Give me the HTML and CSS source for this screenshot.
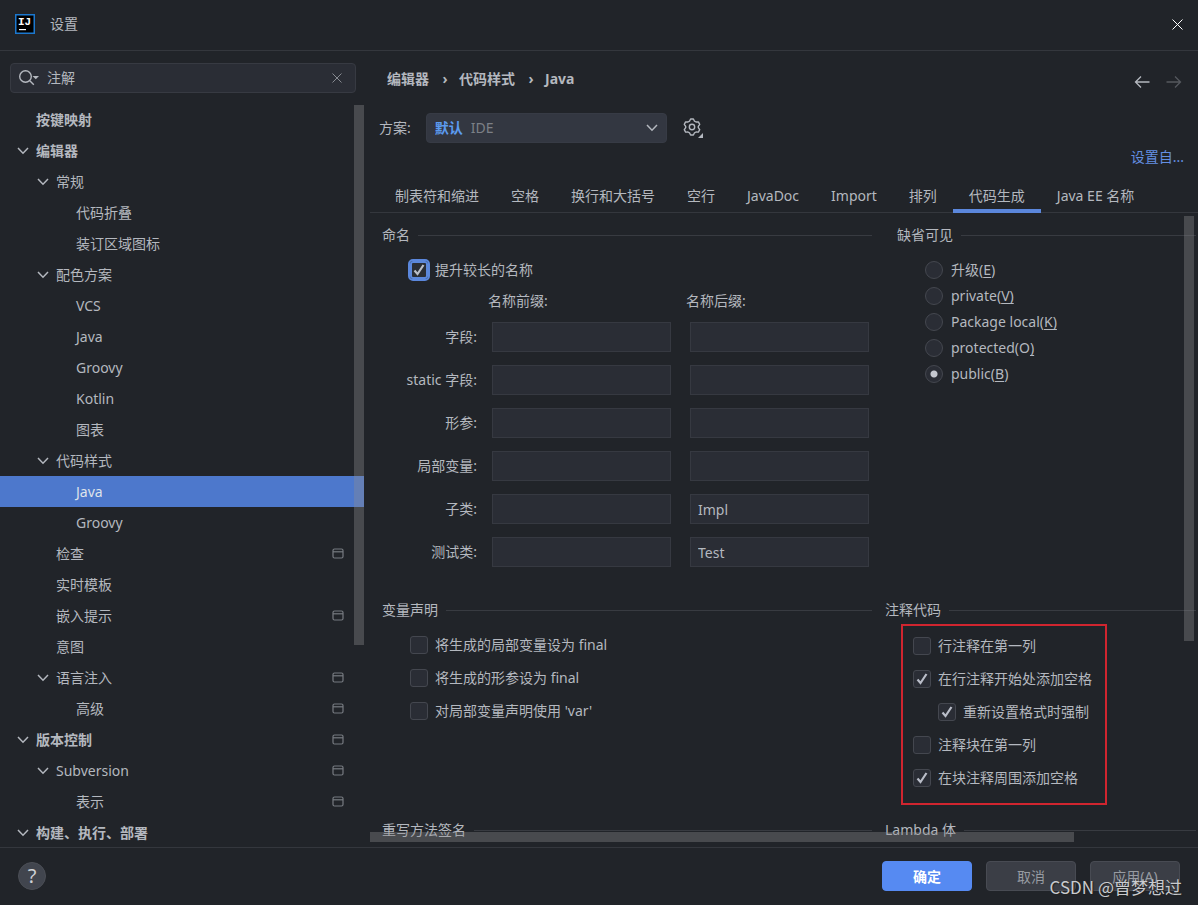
FILE: index.html
```html
<!DOCTYPE html>
<html lang="zh-CN">
<head>
<meta charset="utf-8">
<title>设置</title>
<link rel="stylesheet" href="styles.css">
</head>
<body>
<svg class="defs" aria-hidden="true">
  <symbol id="chev" viewBox="0 0 12 12"><path d="M1 3 6 8.200l5-5.200" fill="none" stroke="currentColor" stroke-width="1.500"/></symbol>
  <symbol id="proj" viewBox="0 0 12 12"><rect x="1" y="1" width="10" height="9" rx="1.500" fill="none" stroke="currentColor" stroke-width="1.200"/><path d="M1 3.800h10" stroke="currentColor" stroke-width="1.200"/></symbol>
</svg>

<header class="titlebar">
  <svg class="logo" viewBox="0 0 20 20" aria-hidden="true">
    <rect x=".75" y=".75" width="18.500" height="18.500" fill="#000" stroke="#1c78cf" stroke-width="1.500"/>
    <text class="logo-text" x="3" y="11">IJ</text>
    <rect x="4" y="15" width="7" height="1.200" fill="#fff"/>
  </svg>
  <h1 class="title">设置</h1>
  <button class="icon-btn close" aria-label="关闭"><svg width="11" height="11" viewBox="0 0 11 11"><path d="M.5.5l10 10M10.500.5l-10 10" stroke="#fff" fill="none"/></svg></button>
</header>

<main class="main">
  <aside class="sidebar">
    <div class="search">
      <svg class="search-icon" width="22" height="18" viewBox="0 0 22 18" aria-hidden="true"><circle cx="6.500" cy="7.500" r="5.800" fill="none" stroke="currentColor" stroke-width="1.400"/><path d="M10.800 11.800l4 4" stroke="currentColor" stroke-width="1.400"/><path d="M13.500 7h6.500l-3.200 3.200z" fill="currentColor"/></svg>
      <input class="search-input" type="text" value="注解" aria-label="搜索">
      <button class="icon-btn clear" aria-label="清除"><svg width="10" height="10" viewBox="0 0 10 10"><path d="M.5.5l9 9M9.500.5l-9 9" stroke="currentColor" fill="none"/></svg></button>
    </div>
    <div class="tree-area">
    <ul class="tree">
      <li class="node l1 bold">按键映射</li>
      <li class="node l1 bold"><svg class="chev"><use href="#chev"/></svg>编辑器</li>
      <li class="node l2"><svg class="chev"><use href="#chev"/></svg>常规</li>
      <li class="node l3">代码折叠</li>
      <li class="node l3">装订区域图标</li>
      <li class="node l2"><svg class="chev"><use href="#chev"/></svg>配色方案</li>
      <li class="node l3">VCS</li>
      <li class="node l3">Java</li>
      <li class="node l3">Groovy</li>
      <li class="node l3">Kotlin</li>
      <li class="node l3">图表</li>
      <li class="node l2"><svg class="chev"><use href="#chev"/></svg>代码样式</li>
      <li class="node l3 selected">Java</li>
      <li class="node l3">Groovy</li>
      <li class="node l2">检查<svg class="proj"><use href="#proj"/></svg></li>
      <li class="node l2">实时模板</li>
      <li class="node l2">嵌入提示<svg class="proj"><use href="#proj"/></svg></li>
      <li class="node l2">意图</li>
      <li class="node l2"><svg class="chev"><use href="#chev"/></svg>语言注入<svg class="proj"><use href="#proj"/></svg></li>
      <li class="node l3">高级<svg class="proj"><use href="#proj"/></svg></li>
      <li class="node l1 bold"><svg class="chev"><use href="#chev"/></svg>版本控制<svg class="proj"><use href="#proj"/></svg></li>
      <li class="node l2"><svg class="chev"><use href="#chev"/></svg>Subversion<svg class="proj"><use href="#proj"/></svg></li>
      <li class="node l3">表示<svg class="proj"><use href="#proj"/></svg></li>
      <li class="node l1 bold"><svg class="chev"><use href="#chev"/></svg>构建、执行、部署</li>
    </ul>
    <div class="scrollbar tree-scroll"></div>
    </div>
  </aside>

  <section class="content">
    <div class="crumb-bar">
      <nav class="crumbs"><span>编辑器</span><span class="sep">›</span><span>代码样式</span><span class="sep">›</span><span>Java</span></nav>
      <div class="history">
        <button class="icon-btn" aria-label="后退"><svg width="16" height="14" viewBox="0 0 16 14"><path d="M15.500 7H1.500M7 1.500 1.500 7 7 12.500" stroke="currentColor" stroke-width="1.300" fill="none"/></svg></button>
        <button class="icon-btn dim" aria-label="前进"><svg width="16" height="14" viewBox="0 0 16 14"><path d="M.5 7h14M9 1.500 14.500 7 9 12.500" stroke="currentColor" stroke-width="1.300" fill="none"/></svg></button>
      </div>
    </div>
    <div class="scheme">
      <label for="scheme">方案:</label>
      <div class="select-wrap">
        <select id="scheme" class="select"><option>默认</option></select>
        <span class="select-note">IDE</span>
        <svg class="select-arrow"><use href="#chev"/></svg>
      </div>
      <button class="icon-btn" aria-label="方案操作"><svg width="20" height="20" viewBox="0 0 20 20"><path d="M6.500 3.200 7.600 1h2.800l1.100 2.200 1.500.8 2.400-.1 1.300 2.400L15.300 8.300v1.400l1.400 2-1.300 2.400-2.400-.1-1.500.8-1.100 2.200H7.600l-1.100-2.200L5 14l-2.400.1-1.300-2.400 1.400-2V8.300l-1.400-2 1.300-2.400L5 4z" fill="none" stroke="currentColor" stroke-width="1.400" stroke-linejoin="round"/><circle cx="9" cy="9" r="2.700" fill="none" stroke="currentColor" stroke-width="1.400"/><path d="M20 15v5h-5z" fill="currentColor"/></svg></button>
    </div>
    <div class="link-row"><a class="link" href="#">设置自...</a></div>
    <div class="tabs" role="tablist">
      <button class="tab" role="tab">制表符和缩进</button>
      <button class="tab" role="tab">空格</button>
      <button class="tab" role="tab">换行和大括号</button>
      <button class="tab" role="tab">空行</button>
      <button class="tab" role="tab">JavaDoc</button>
      <button class="tab" role="tab">Import</button>
      <button class="tab" role="tab">排列</button>
      <button class="tab active" role="tab" aria-selected="true">代码生成</button>
      <button class="tab" role="tab">Java EE 名称</button>
    </div>

    <div class="panel">
      <div class="groups top">
        <section>
          <h2 class="group-title">命名</h2>
          <label class="check naming-check"><input class="box focused" type="checkbox" checked>提升较长的名称</label>
          <div class="fields">
            <span class="col-head first">名称前缀:</span><span class="col-head">名称后缀:</span>
            <label class="field-label" for="f1">字段:</label><input id="f1" class="field" type="text"><input class="field" type="text" aria-label="字段后缀">
            <label class="field-label" for="f2">static 字段:</label><input id="f2" class="field" type="text"><input class="field" type="text" aria-label="static 字段后缀">
            <label class="field-label" for="f3">形参:</label><input id="f3" class="field" type="text"><input class="field" type="text" aria-label="形参后缀">
            <label class="field-label" for="f4">局部变量:</label><input id="f4" class="field" type="text"><input class="field" type="text" aria-label="局部变量后缀">
            <label class="field-label" for="f5">子类:</label><input id="f5" class="field" type="text"><input class="field" type="text" value="Impl" aria-label="子类后缀">
            <label class="field-label" for="f6">测试类:</label><input id="f6" class="field" type="text"><input class="field" type="text" value="Test" aria-label="测试类后缀">
          </div>
        </section>
        <section>
          <h2 class="group-title">缺省可见</h2>
          <div class="radios">
            <label class="radio-row"><input class="radio" type="radio" name="vis"><span>升级(<u>E</u>)</span></label>
            <label class="radio-row"><input class="radio" type="radio" name="vis"><span>private(<u>V)</u></span></label>
            <label class="radio-row"><input class="radio" type="radio" name="vis"><span>Package local(<u>K)</u></span></label>
            <label class="radio-row"><input class="radio" type="radio" name="vis"><span>protected(O<u>)</u></span></label>
            <label class="radio-row"><input class="radio" type="radio" name="vis" checked><span>public(<u>B</u>)</span></label>
          </div>
        </section>
      </div>
      <div class="groups">
        <section>
          <h2 class="group-title">变量声明</h2>
          <div class="checks">
            <label class="check"><input class="box" type="checkbox">将生成的局部变量设为 final</label>
            <label class="check"><input class="box" type="checkbox">将生成的形参设为 final</label>
            <label class="check"><input class="box" type="checkbox">对局部变量声明使用 'var'</label>
          </div>
        </section>
        <section>
          <h2 class="group-title">注释代码</h2>
          <div class="checks marked">
            <label class="check"><input class="box" type="checkbox">行注释在第一列</label>
            <label class="check"><input class="box" type="checkbox" checked>在行注释开始处添加空格</label>
            <label class="check nested"><input class="box" type="checkbox" checked>重新设置格式时强制</label>
            <label class="check"><input class="box" type="checkbox">注释块在第一列</label>
            <label class="check"><input class="box" type="checkbox" checked>在块注释周围添加空格</label>
          </div>
        </section>
      </div>
      <div class="groups">
        <h2 class="group-title">重写方法签名</h2>
        <h2 class="group-title">Lambda 体</h2>
      </div>
      <div class="scrollbar panel-v"></div>
      <div class="scrollbar panel-h"></div>
    </div>
  </section>
</main>

<footer class="footer">
  <button class="help" aria-label="帮助">?</button>
  <div class="actions">
    <button class="btn primary">确定</button>
    <button class="btn">取消</button>
    <button class="btn">应用(A)</button>
  </div>
  <span class="watermark">CSDN @曾梦想过</span>
</footer>
</body>
</html>
```

FILE: styles.css
```css
* { box-sizing: border-box; }

body {
  margin: 0;
  height: 100vh;
  display: flex;
  flex-direction: column;
  overflow: hidden;
  background: #212429;
  color: #b4b8bf;
  font: 14px/20px "Noto Sans", "Noto Sans CJK SC", sans-serif;
}

button, input, select { font: inherit; color: inherit; }
h1, h2 { margin: 0; font-size: 14px; font-weight: 400; }
.defs { position: absolute; width: 0; height: 0; }

.icon-btn {
  display: flex;
  padding: 0;
  border: 0;
  background: none;
}

.titlebar {
  display: flex;
  align-items: center;
  height: 51px;
  padding: 0 15px 2px;
  border-bottom: 1px solid #34373d;
  flex: none;
}
.logo { width: 20px; height: 20px; margin-right: 15px; }
.logo-text { font: bold 11px "Liberation Mono", monospace; fill: #fff; }
.close { margin-left: auto; }

.main { display: flex; flex: 1; min-height: 0; }

/* Sidebar */
.sidebar {
  width: 370px;
  flex: none;
  display: flex;
  flex-direction: column;
  padding-top: 12px;
}
.search {
  display: flex;
  align-items: center;
  flex: none;
  height: 30px;
  margin: 0 14px 11px 10px;
  padding: 0 13px 0 8px;
  background: #2a2d35;
  border: 1px solid #373a42;
  border-radius: 4px;
}
.search-input {
  flex: 1;
  min-width: 0;
  padding: 0 6px;
  border: 0;
  background: none;
  outline: none;
}
.clear { color: #868a91; }

.tree-area { position: relative; flex: 1; min-height: 0; overflow: hidden; margin-right: 6px; }
.tree { margin: 0; padding: 0; list-style: none; }
.node {
  display: flex;
  align-items: center;
  height: 31px;
  padding-right: 20px;
}
.bold { font-weight: 700; }
.l1 { padding-left: 36px; }
.l2 { padding-left: 56px; }
.l3 { padding-left: 76px; }
.selected { background: #4d78cc; color: #dfe3ea; }
.chev { width: 12px; height: 12px; margin: 0 7px 0 -19px; }
.proj { width: 12px; height: 12px; margin-left: auto; color: #777b81; }

.scrollbar { position: absolute; background: rgba(140, 142, 144, 0.36); }
.tree-scroll { top: 1px; right: 0; width: 10px; height: 540px; }

/* Content */
.content { flex: 1; min-width: 0; display: flex; flex-direction: column; }
.crumb-bar {
  display: flex;
  align-items: center;
  justify-content: space-between;
  height: 56px;
  padding: 0 16px 0 17px;
  flex: none;
}
.crumbs { display: flex; font-weight: 700; }
.sep { width: 30px; padding-left: 2px; text-align: center; }
.history { display: flex; gap: 16px; padding-top: 6px; }
.dim { color: #55585e; }

.scheme { display: flex; align-items: center; height: 42px; padding-left: 9px; flex: none; }
.select-wrap { position: relative; width: 241px; margin: 0 16px 0 15px; }
.select {
  display: block;
  width: 100%;
  height: 30px;
  padding: 0 8px;
  appearance: none;
  border: 1px solid #373b45;
  border-radius: 4px;
  background: #333741;
  color: #5c9bf0;
  font-weight: 700;
}
.select-note { position: absolute; left: 45px; top: 5px; color: #7c8087; pointer-events: none; }
.select-arrow { position: absolute; right: 9px; top: 9px; width: 12px; height: 12px; pointer-events: none; }

.link-row { display: flex; justify-content: flex-end; height: 16px; padding-right: 14px; line-height: 16px; flex: none; }
.link { color: #648fe2; text-decoration: none; }

.tabs {
  display: flex;
  height: 34px;
  margin-top: 14px;
  padding-left: 9px;
  border-bottom: 1px solid #34373d;
  flex: none;
}
.tab {
  height: 34px;
  padding: 4px 16px 0;
  border: 0;
  border-bottom: 4px solid transparent;
  background: none;
  white-space: nowrap;
}
.tab.active { border-bottom-color: #5b87dc; }

.panel { position: relative; flex: 1; min-height: 0; overflow: hidden; padding: 12px 2px 0 12px; }
.groups { display: grid; grid-template-columns: 490px 1fr; column-gap: 13px; }
.groups.top { column-gap: 25px; }
.group-title { display: flex; align-items: center; gap: 8px; white-space: nowrap; height: 20px; }
.group-title::after { content: ""; flex: 1; height: 1px; background: #383b41; }

.check { display: flex; align-items: center; gap: 7px; height: 33px; white-space: nowrap; }
.naming-check { margin: 8px 0 5px 28px; }
.box {
  appearance: none;
  width: 18px;
  height: 18px;
  margin: 0;
  flex: none;
  border: 1px solid #44474f;
  border-radius: 3px;
  background: #2a2d35;
}
.box:checked {
  background: #2a2d35 url("data:image/svg+xml,%3Csvg xmlns='http://www.w3.org/2000/svg' viewBox='0 0 16 16'%3E%3Cpath d='M3.500 8.500l3 3.500 6-9' fill='none' stroke='%23b9bdc8' stroke-width='2.200'/%3E%3C/svg%3E") center / 16px 16px no-repeat;
}
.box.focused { border: 2px solid #5b87dc; outline: 2px solid #5b87dc; }

.fields {
  display: grid;
  grid-template-columns: 106px 198px 184px;
  row-gap: 13px;
  align-items: center;
  padding-bottom: 33px;
}
.col-head { height: 18px; }
.col-head.first { grid-column: 2; }
.field-label { padding-right: 11px; text-align: right; white-space: nowrap; }
.field {
  width: 179px;
  height: 30px;
  margin-left: 4px;
  padding: 0 7px;
  border: 1px solid #363941;
  background: #2a2d35;
}

.radios { padding: 12px 0 0 28px; }
.radio-row { display: flex; align-items: center; gap: 8px; height: 26px; }
.radio {
  appearance: none;
  width: 18px;
  height: 18px;
  margin: 0;
  border: 1px solid #44474f;
  border-radius: 50%;
  background: #2a2d35;
}
.radio:checked { background: radial-gradient(circle, #c4c7cf 3px, #2a2d35 4px); }
u { text-underline-offset: 2px; }

.checks { padding: 8px 0 0 28px; }
.marked {
  width: 206px;
  margin: 4px 0 15px 16px;
  padding: 3px 0 9px 10px;
  border: 2px solid #d0252f;
}
.nested { margin-left: 25px; }

.panel-v { top: 3px; right: 4px; width: 10px; height: 425px; }
.panel-h { left: 0; bottom: 5px; width: 85%; height: 10px; }

/* Footer */
.footer {
  position: relative;
  display: flex;
  align-items: center;
  justify-content: space-between;
  height: 58px;
  padding: 0 18px 1px;
  border-top: 1px solid #34373d;
  flex: none;
}
.help {
  width: 28px;
  height: 28px;
  padding: 0;
  border: 1px solid #4b4e55;
  border-radius: 50%;
  background: #41454e;
  color: #ced1d6;
  font-size: 20px;
  line-height: 26px;
}
.actions { display: flex; gap: 14px; }
.btn {
  width: 90px;
  height: 30px;
  padding: 2px 0 0;
  border: 1px solid #484b53;
  border-radius: 4px;
  background: #3b3e46;
  color: #979ba2;
}
.btn.primary { background: #568af2; border-color: #568af2; color: #fff; font-weight: 700; }
.watermark {
  position: absolute;
  right: 16px;
  bottom: 7px;
  color: #c9cbce;
  font: 17px/22px "Noto Sans CJK SC", sans-serif;
  text-shadow: 1px 1px 1px #222;
  pointer-events: none;
}
```
